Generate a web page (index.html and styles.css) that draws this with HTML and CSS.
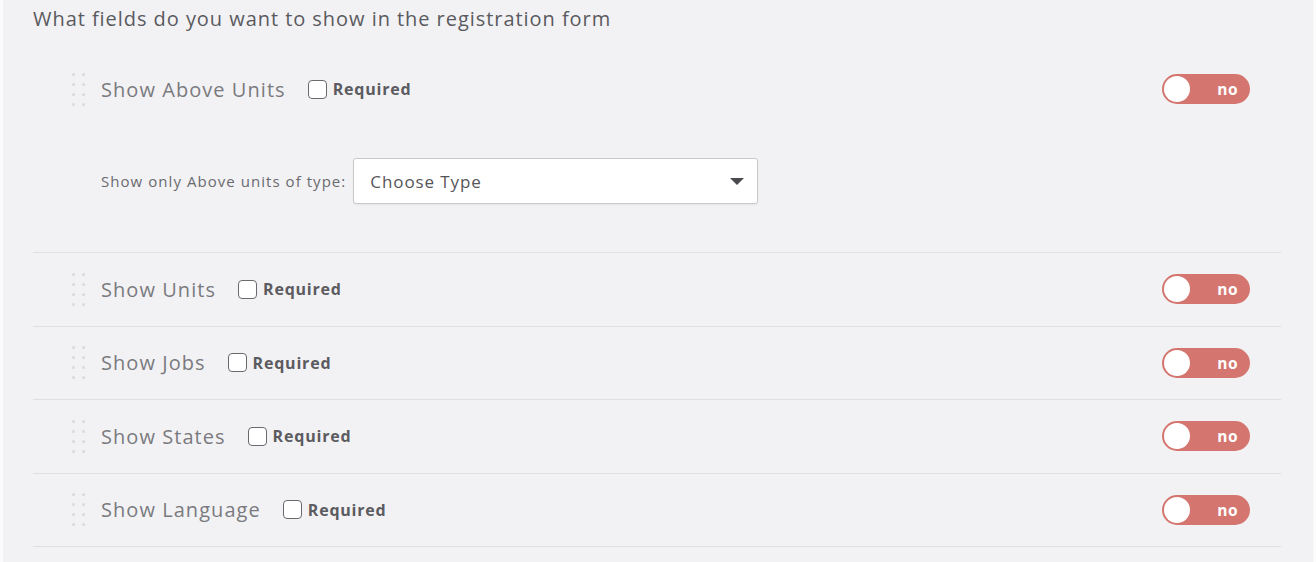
FILE: index.html
```html
<!DOCTYPE html>
<html>
<head>
<meta charset="utf-8">
<link rel="stylesheet" href="styles.css">
</head>
<body>
<div class="panel">
  <div class="title">What fields do you want to show in the registration form</div>
  <div class="list">
    <div class="row row-first">
      <div class="line">
        <span class="handle"><i></i><i></i><i></i><i></i><i></i><i></i><i></i><i></i></span>
        <span class="label">Show Above Units</span>
        <label class="req"><span class="box"></span>Required</label>
        <span class="toggle"><span class="knob"></span><span class="tog-text">no</span></span>
      </div>
      <div class="sub">
        <span class="sub-label">Show only Above units of type:</span>
        <div class="select"><span>Choose Type</span><span class="caret"></span></div>
      </div>
    </div>
    <div class="row">
      <div class="line">
        <span class="handle"><i></i><i></i><i></i><i></i><i></i><i></i><i></i><i></i></span>
        <span class="label">Show Units</span>
        <label class="req"><span class="box"></span>Required</label>
        <span class="toggle"><span class="knob"></span><span class="tog-text">no</span></span>
      </div>
    </div>
    <div class="row">
      <div class="line">
        <span class="handle"><i></i><i></i><i></i><i></i><i></i><i></i><i></i><i></i></span>
        <span class="label">Show Jobs</span>
        <label class="req"><span class="box"></span>Required</label>
        <span class="toggle"><span class="knob"></span><span class="tog-text">no</span></span>
      </div>
    </div>
    <div class="row">
      <div class="line">
        <span class="handle"><i></i><i></i><i></i><i></i><i></i><i></i><i></i><i></i></span>
        <span class="label">Show States</span>
        <label class="req"><span class="box"></span>Required</label>
        <span class="toggle"><span class="knob"></span><span class="tog-text">no</span></span>
      </div>
    </div>
    <div class="row">
      <div class="line">
        <span class="handle"><i></i><i></i><i></i><i></i><i></i><i></i><i></i><i></i></span>
        <span class="label">Show Language</span>
        <label class="req"><span class="box"></span>Required</label>
        <span class="toggle"><span class="knob"></span><span class="tog-text">no</span></span>
      </div>
    </div>
  </div>
</div>
</body>
</html>
```
FILE: styles.css
```css
html, body {
  margin: 0;
  padding: 0;
  background: #fbfbfc;
}
body {
  font-family: "Open Sans", "Liberation Sans", sans-serif;
  color: #555;
}
.panel {
  margin: 0 3px;
  height: 562px;
  background: #f2f2f5;
  padding: 6px 32px 0 30px;
  box-sizing: border-box;
}
.title {
  font-size: 20px;
  letter-spacing: 0.95px;
  line-height: 26px;
  color: #5a5a5e;
}
.list {
  margin-top: 21px;
}
.row {
  border-bottom: 1px solid #dfdfe3;
}
.line {
  display: flex;
  align-items: center;
  height: 72.5px;
  padding: 0 31px 0 39px;
}
.row-first {
  padding-bottom: 48px;
}
.handle {
  display: grid;
  grid-template-columns: 3px 3px;
  column-gap: 7px;
  row-gap: 7px;
  width: 13px;
  margin-right: 16px;
}
.handle i {
  display: block;
  width: 3px;
  height: 3px;
  border-radius: 50%;
  background: #d9d9de;
}
.label {
  font-size: 20px;
  letter-spacing: 1.05px;
  color: #7a7a7e;
}
.req {
  display: flex;
  align-items: center;
  margin-left: 22px;
  font-size: 16px;
  letter-spacing: 0.8px;
  font-weight: 700;
  color: #5b5b60;
}
.box {
  width: 17px;
  height: 17px;
  border: 1.5px solid #6a6a6e;
  border-radius: 4px;
  background: #fff;
  margin-right: 6px;
}
.toggle {
  margin-left: auto;
  position: relative;
  width: 88px;
  height: 30px;
  border-radius: 15px;
  background: #d4766f;
  display: flex;
  align-items: center;
  justify-content: flex-end;
  box-sizing: border-box;
  padding-right: 12px;
}
.knob {
  position: absolute;
  left: 2px;
  top: 2px;
  width: 26px;
  height: 26px;
  border-radius: 50%;
  background: #fff;
}
.tog-text {
  color: #fff;
  font-weight: 700;
  font-size: 15.5px;
  letter-spacing: 0.5px;
}
.sub {
  display: flex;
  align-items: center;
  margin-top: 32.5px;
  padding-left: 68px;
}
.sub-label {
  font-size: 15px;
  letter-spacing: 1.05px;
  color: #6a6a6e;
  margin-right: 7px;
}
.select {
  width: 405px;
  height: 46px;
  box-sizing: border-box;
  background: #fff;
  border: 1px solid #c9c9cc;
  border-radius: 3px;
  box-shadow: 0 1px 2px rgba(0,0,0,0.06);
  display: flex;
  align-items: center;
  justify-content: space-between;
  padding: 0 13px 0 16px;
  font-size: 17px;
  letter-spacing: 0.9px;
  color: #56565a;
}
.caret {
  width: 0;
  height: 0;
  border-left: 7px solid transparent;
  border-right: 7px solid transparent;
  border-top: 7px solid #4a4a4e;
}
```
